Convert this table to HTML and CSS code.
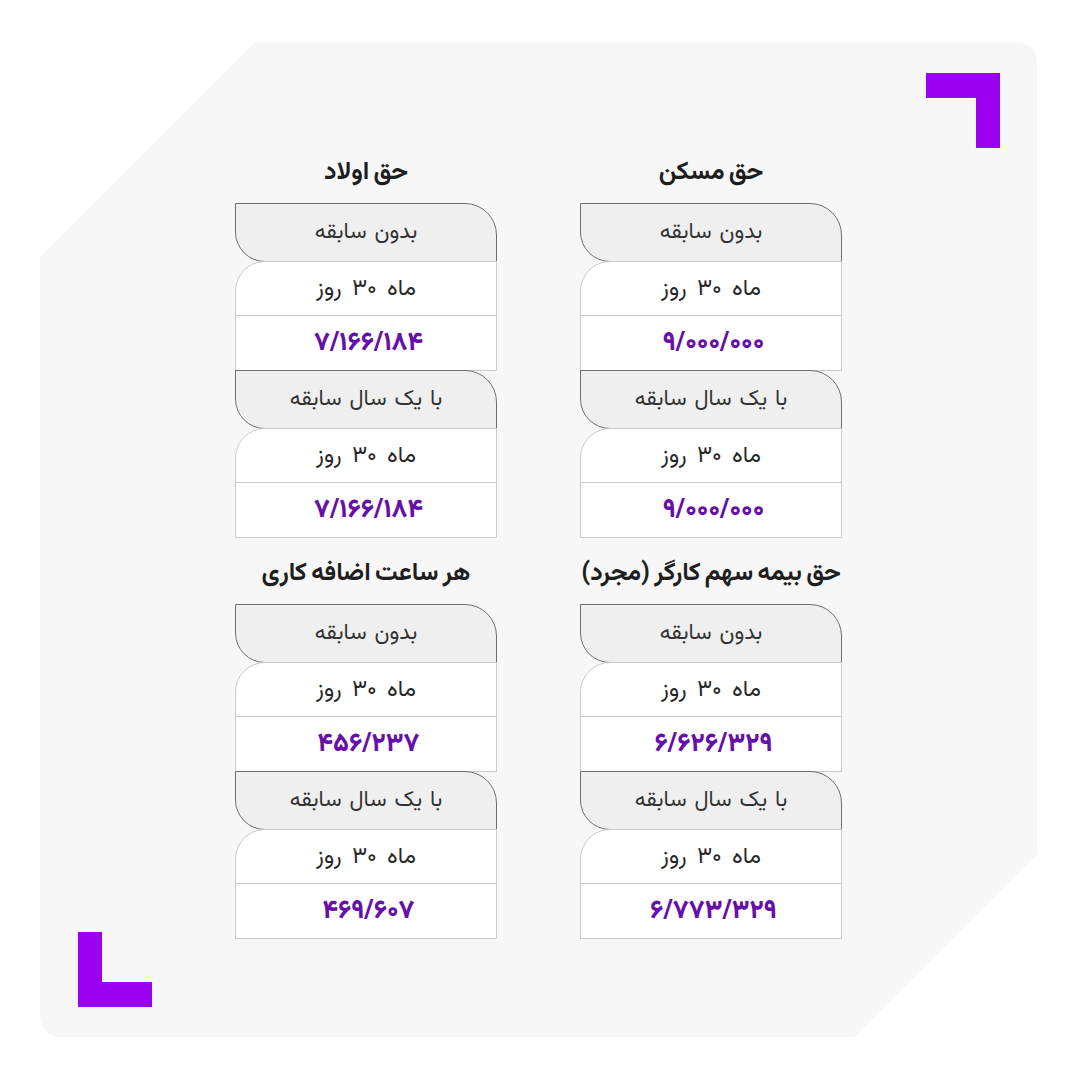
FILE: index.html
```html
<!DOCTYPE html>
<html lang="fa" dir="rtl">
<head>
<meta charset="utf-8">
<title>حقوق و دستمزد</title>
<link rel="stylesheet" href="styles.css">
</head>
<body>
<div class="board">
  <span class="bracket bracket-tr"></span>
  <span class="bracket bracket-bl"></span>
  <div class="grid">
    <section class="block">
      <h2 class="title">حق مسکن</h2>
      <div class="card">
        <div class="head">بدون سابقه</div>
        <div class="row row-first">ماه ۳۰ روز</div>
        <div class="row row-num"><span class="num">۹/۰۰۰/۰۰۰</span></div>
        <div class="head">با یک سال سابقه</div>
        <div class="row row-first">ماه ۳۰ روز</div>
        <div class="row row-num"><span class="num">۹/۰۰۰/۰۰۰</span></div>
      </div>
    </section>
    <section class="block">
      <h2 class="title">حق اولاد</h2>
      <div class="card">
        <div class="head">بدون سابقه</div>
        <div class="row row-first">ماه ۳۰ روز</div>
        <div class="row row-num"><span class="num">۷/۱۶۶/۱۸۴</span></div>
        <div class="head">با یک سال سابقه</div>
        <div class="row row-first">ماه ۳۰ روز</div>
        <div class="row row-num"><span class="num">۷/۱۶۶/۱۸۴</span></div>
      </div>
    </section>
    <section class="block">
      <h2 class="title">حق بیمه سهم کارگر (مجرد)</h2>
      <div class="card">
        <div class="head">بدون سابقه</div>
        <div class="row row-first">ماه ۳۰ روز</div>
        <div class="row row-num"><span class="num">۶/۶۲۶/۳۲۹</span></div>
        <div class="head">با یک سال سابقه</div>
        <div class="row row-first">ماه ۳۰ روز</div>
        <div class="row row-num"><span class="num">۶/۷۷۳/۳۲۹</span></div>
      </div>
    </section>
    <section class="block">
      <h2 class="title">هر ساعت اضافه کاری</h2>
      <div class="card">
        <div class="head">بدون سابقه</div>
        <div class="row row-first">ماه ۳۰ روز</div>
        <div class="row row-num"><span class="num">۴۵۶/۲۳۷</span></div>
        <div class="head">با یک سال سابقه</div>
        <div class="row row-first">ماه ۳۰ روز</div>
        <div class="row row-num"><span class="num">۴۶۹/۶۰۷</span></div>
      </div>
    </section>
  </div>
</div>
</body>
</html>
```
FILE: styles.css
```css
* { box-sizing: border-box; }

html, body {
  margin: 0;
  padding: 0;
  background: #ffffff;
}

body {
  width: 1080px;
  height: 1080px;
  padding: 42px 43px 43px 40px;
  font-family: "Vazirmatn", "Noto Sans Arabic", "DejaVu Sans", sans-serif;
  color: #333333;
}

.board {
  position: relative;
  width: 997px;
  height: 995px;
  background: #f7f7f7;
  border-radius: 20px;
  clip-path: polygon(215px 0, 100% 0, 100% calc(100% - 183px), calc(100% - 183px) 100%, 0 100%, 0 215px);
  padding-top: 112px;
}

.bracket {
  position: absolute;
  width: 74px;
  height: 75px;
  border-color: #9b00f0;
  border-style: solid;
  border-width: 0;
}

.bracket-tr {
  top: 31px;
  right: 37px;
  border-top-width: 25px;
  border-right-width: 24px;
}

.bracket-bl {
  bottom: 30px;
  left: 38px;
  border-bottom-width: 25px;
  border-left-width: 24px;
}

.grid {
  display: grid;
  grid-template-columns: 262px 262px;
  column-gap: 83px;
  row-gap: 17px;
  justify-content: center;
}

.block {
  display: flex;
  flex-direction: column;
}

.title {
  margin: 0 0 11px;
  height: 38px;
  line-height: 38px;
  text-align: center;
  font-size: 25px;
  font-weight: 700;
  color: #1e1e1e;
  word-spacing: -2px;
  white-space: nowrap;
}

.card {
  display: flex;
  flex-direction: column;
}

.head {
  height: 59px;
  display: flex;
  align-items: center;
  justify-content: center;
  background: #efefef;
  border: 1px solid #6f6f6f;
  border-radius: 0 32px 0 30px;
  font-size: 22px;
  letter-spacing: 0.5px;
  word-spacing: 2px;
  color: #333333;
}

.row {
  display: flex;
  align-items: center;
  justify-content: center;
  background: #ffffff;
  border: 1px solid #cbcbcb;
  margin-top: -1px;
  font-size: 23px;
  word-spacing: 4px;
  color: #262626;
}

.row-first {
  height: 55px;
  border-top-left-radius: 30px;
}

.row-num {
  height: 56px;
}

.row-num + .head { margin-top: -1px; }

.num {
  direction: ltr;
  unicode-bidi: isolate;
  font-size: 26px;
  font-weight: 800;
  color: #6610aa;
  letter-spacing: 5px;
  margin-left: 5px;
}
```
